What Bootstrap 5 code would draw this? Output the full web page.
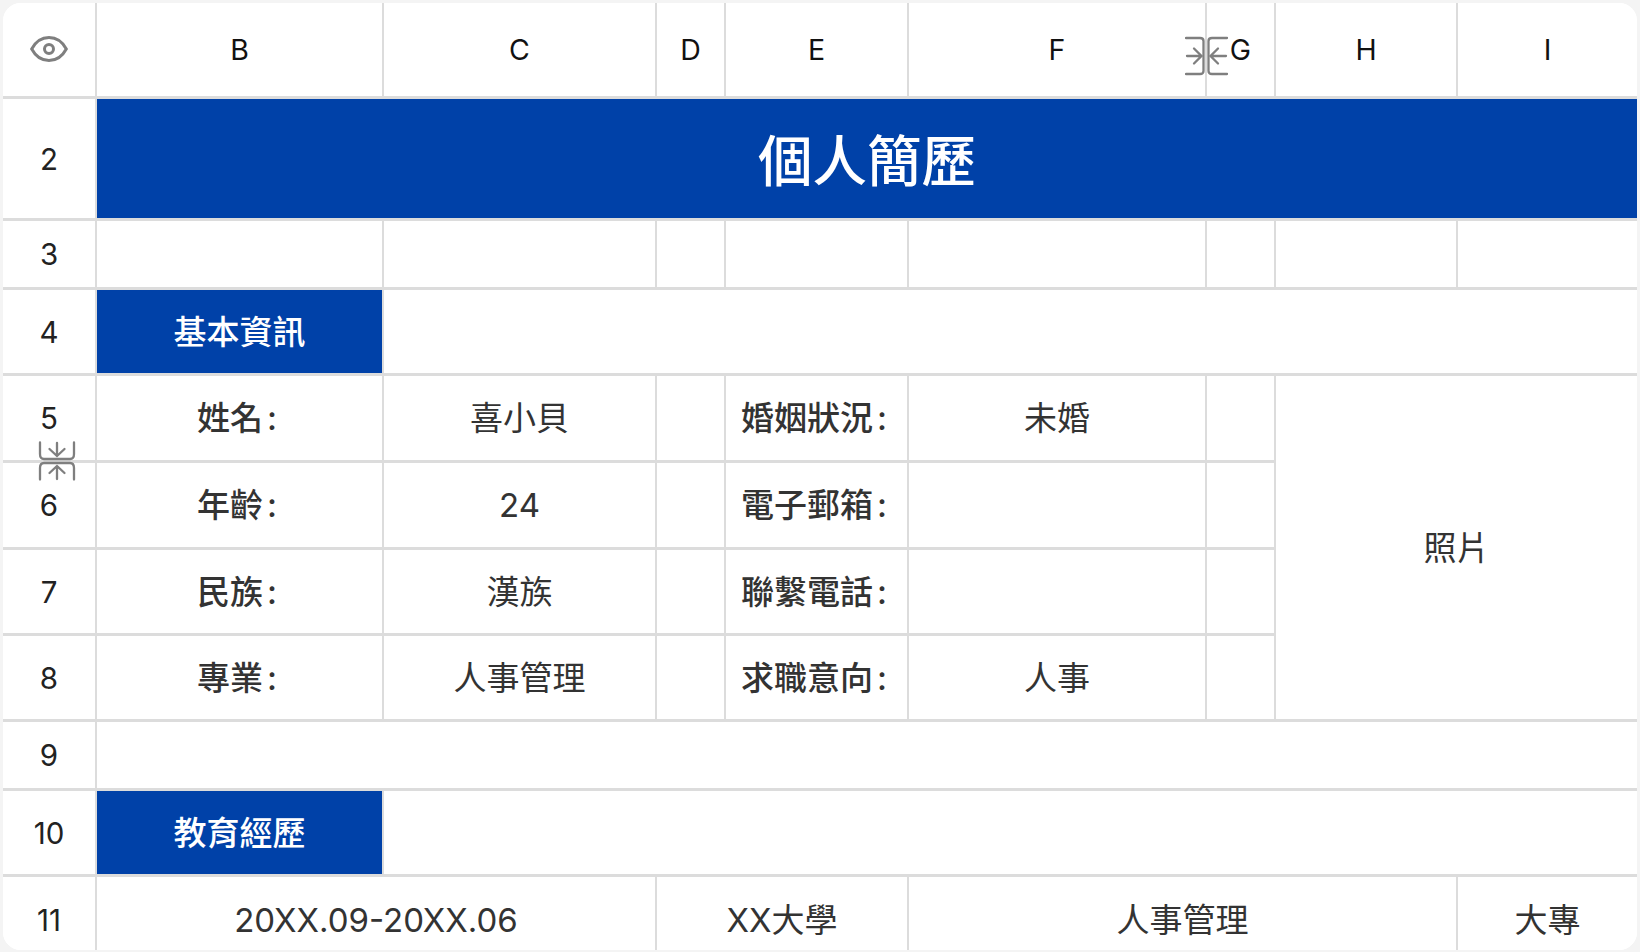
<!DOCTYPE html>
<html lang="zh-TW">
<head>
    <meta charset="UTF-8">
    <meta name="viewport" content="width=device-width, initial-scale=1.0">
    <title>個人簡歷</title>
    <link href="https://cdn.jsdelivr.net/npm/bootstrap@5.3.3/dist/css/bootstrap.min.css" rel="stylesheet">
    <style>
        html, body { height: 100%; }
        body { background: #f4f4f4; font-family: Inter, "Noto Sans CJK TC", sans-serif; overflow: hidden; }
        .sheet-wrap { position: relative; width: 1634px; height: 947px; margin: 3px 3px 0 3px; background: #fff; border-radius: 18px; overflow: hidden; }
        .sheet { width: 1634px; table-layout: fixed; border-collapse: collapse; margin: 0; color: #333; }
        .sheet td, .sheet th { border: 0 solid #dcdcdc; border-width: 0 2px 3px 0; padding: 2px 0 0; text-align: center; vertical-align: middle; font-size: 33px; font-weight: 400; line-height: 1; color: #333; background: #fff; box-shadow: none; white-space: nowrap; }
        .sheet tr:not(.photo-row) > :last-child { border-right: 0; }
        .sheet tr.last-row > * { border-bottom: 0; padding-top: 14px; }
        .sheet th.row-head { font-size: 29.5px; color: #222; padding-top: 3px; }
        .sheet tr.last-row > th.row-head { padding-top: 14px; }
        .sheet th.col-head { font-size: 28.5px; color: #111; }
        .sheet td.label-cell { font-weight: 500; }
        .sheet td.fill-blue { background: #0041a8; color: #fff; font-weight: 500; }
        .sheet td.title-cell { font-size: 54.5px; font-weight: 500; padding-top: 6px; }
        .colon-mark { margin: 0 5px 0 4px; }
        .c-a { width: 93px; } .c-b { width: 287px; } .c-c { width: 273px; } .c-d { width: 69px; } .c-e { width: 183px; }
        .c-f { width: 298px; } .c-g { width: 69px; } .c-h { width: 182px; } .c-i { width: 180px; }
        .h-1 { height: 94px; } .h-2 { height: 122px; } .h-3 { height: 69px; } .h-4 { height: 86px; } .h-5 { height: 87px; } .h-6 { height: 86px; }
        .h-9 { height: 69px; } .h-11 { height: 75px; }
        .sheet-icon { position: absolute; color: #7f7f7f; }
        .eye-icon { left: 27px; top: 33px; }
        .col-grip { left: 1182px; top: 33px; }
        .row-grip { left: 35px; top: 438px; }
    </style>
</head>
<body>
    <div class="sheet-wrap">
        <table class="table sheet">
            <colgroup>
                <col class="c-a"><col class="c-b"><col class="c-c"><col class="c-d"><col class="c-e"><col class="c-f"><col class="c-g"><col class="c-h"><col class="c-i">
            </colgroup>
            <tbody>
                <tr class="h-1">
                    <th class="row-head"></th>
                    <th class="col-head">B</th><th class="col-head">C</th><th class="col-head">D</th><th class="col-head">E</th>
                    <th class="col-head">F</th><th class="col-head">G</th><th class="col-head">H</th><th class="col-head">I</th>
                </tr>
                <tr class="h-2">
                    <th class="row-head">2</th>
                    <td class="fill-blue title-cell" colspan="8">個人簡歷</td>
                </tr>
                <tr class="h-3">
                    <th class="row-head">3</th>
                    <td></td><td></td><td></td><td></td><td></td><td></td><td></td><td></td>
                </tr>
                <tr class="h-4">
                    <th class="row-head">4</th>
                    <td class="fill-blue">基本資訊</td>
                    <td colspan="7"></td>
                </tr>
                <tr class="h-5">
                    <th class="row-head">5</th>
                    <td class="label-cell">姓名<span class="colon-mark">:</span></td><td>喜小貝</td><td></td>
                    <td class="label-cell">婚姻狀況<span class="colon-mark">:</span></td><td>未婚</td><td></td>
                    <td colspan="2" rowspan="4">照片</td>
                </tr>
                <tr class="h-5 photo-row">
                    <th class="row-head">6</th>
                    <td class="label-cell">年齡<span class="colon-mark">:</span></td><td>24</td><td></td>
                    <td class="label-cell">電子郵箱<span class="colon-mark">:</span></td><td></td><td></td>
                </tr>
                <tr class="h-6 photo-row">
                    <th class="row-head">7</th>
                    <td class="label-cell">民族<span class="colon-mark">:</span></td><td>漢族</td><td></td>
                    <td class="label-cell">聯繫電話<span class="colon-mark">:</span></td><td></td><td></td>
                </tr>
                <tr class="h-6 photo-row">
                    <th class="row-head">8</th>
                    <td class="label-cell">專業<span class="colon-mark">:</span></td><td>人事管理</td><td></td>
                    <td class="label-cell">求職意向<span class="colon-mark">:</span></td><td>人事</td><td></td>
                </tr>
                <tr class="h-9">
                    <th class="row-head">9</th>
                    <td colspan="8"></td>
                </tr>
                <tr class="h-4">
                    <th class="row-head">10</th>
                    <td class="fill-blue">教育經歷</td>
                    <td colspan="7"></td>
                </tr>
                <tr class="h-11 last-row">
                    <th class="row-head">11</th>
                    <td colspan="2">20XX.09-20XX.06</td>
                    <td colspan="2">XX大學</td>
                    <td colspan="3">人事管理</td>
                    <td>大專</td>
                </tr>
            </tbody>
        </table>

        <svg class="sheet-icon eye-icon" width="38" height="26" viewBox="0 0 38 26" fill="none" stroke="currentColor" stroke-width="3">
            <path d="M1.7 13C6 5 12 1.5 19 1.5S32 5 36.3 13C32 21 26 24.5 19 24.5S6 21 1.7 13Z"/>
            <circle cx="19" cy="13" r="4.5"/>
        </svg>
        <svg class="sheet-icon col-grip" width="44" height="40" viewBox="0 0 44 40" fill="none" stroke="currentColor" stroke-width="2.3" stroke-linecap="round">
            <path d="M1 2H15Q18.5 2 18.5 5V35Q18.5 38 15 38H1"/>
            <path d="M42 2H27Q23.5 2 23.5 5V35Q23.5 38 27 38H42"/>
            <path d="M2 20H16M9 12.500L16.500 20L9 27.500"/>
            <path d="M41 20H26M33 12.500L25.500 20L33 27.500"/>
        </svg>
        <svg class="sheet-icon row-grip" width="38" height="40" viewBox="0 0 38 40" fill="none" stroke="currentColor" stroke-width="2.3" stroke-linecap="round">
            <path d="M2 1.500V13Q2 18 6 18H32Q36 18 36 13V1.500"/>
            <path d="M2 38.500V27Q2 22 6 22H32Q36 22 36 27V38.500"/>
            <path d="M19 2V14.500M11.500 8L19 15L26.500 8"/>
            <path d="M19 38V25.500M11.500 32L19 25L26.500 32"/>
        </svg>
    </div>
    <script src="https://cdn.jsdelivr.net/npm/bootstrap@5.3.3/dist/js/bootstrap.bundle.min.js"></script>
</body>
</html>
